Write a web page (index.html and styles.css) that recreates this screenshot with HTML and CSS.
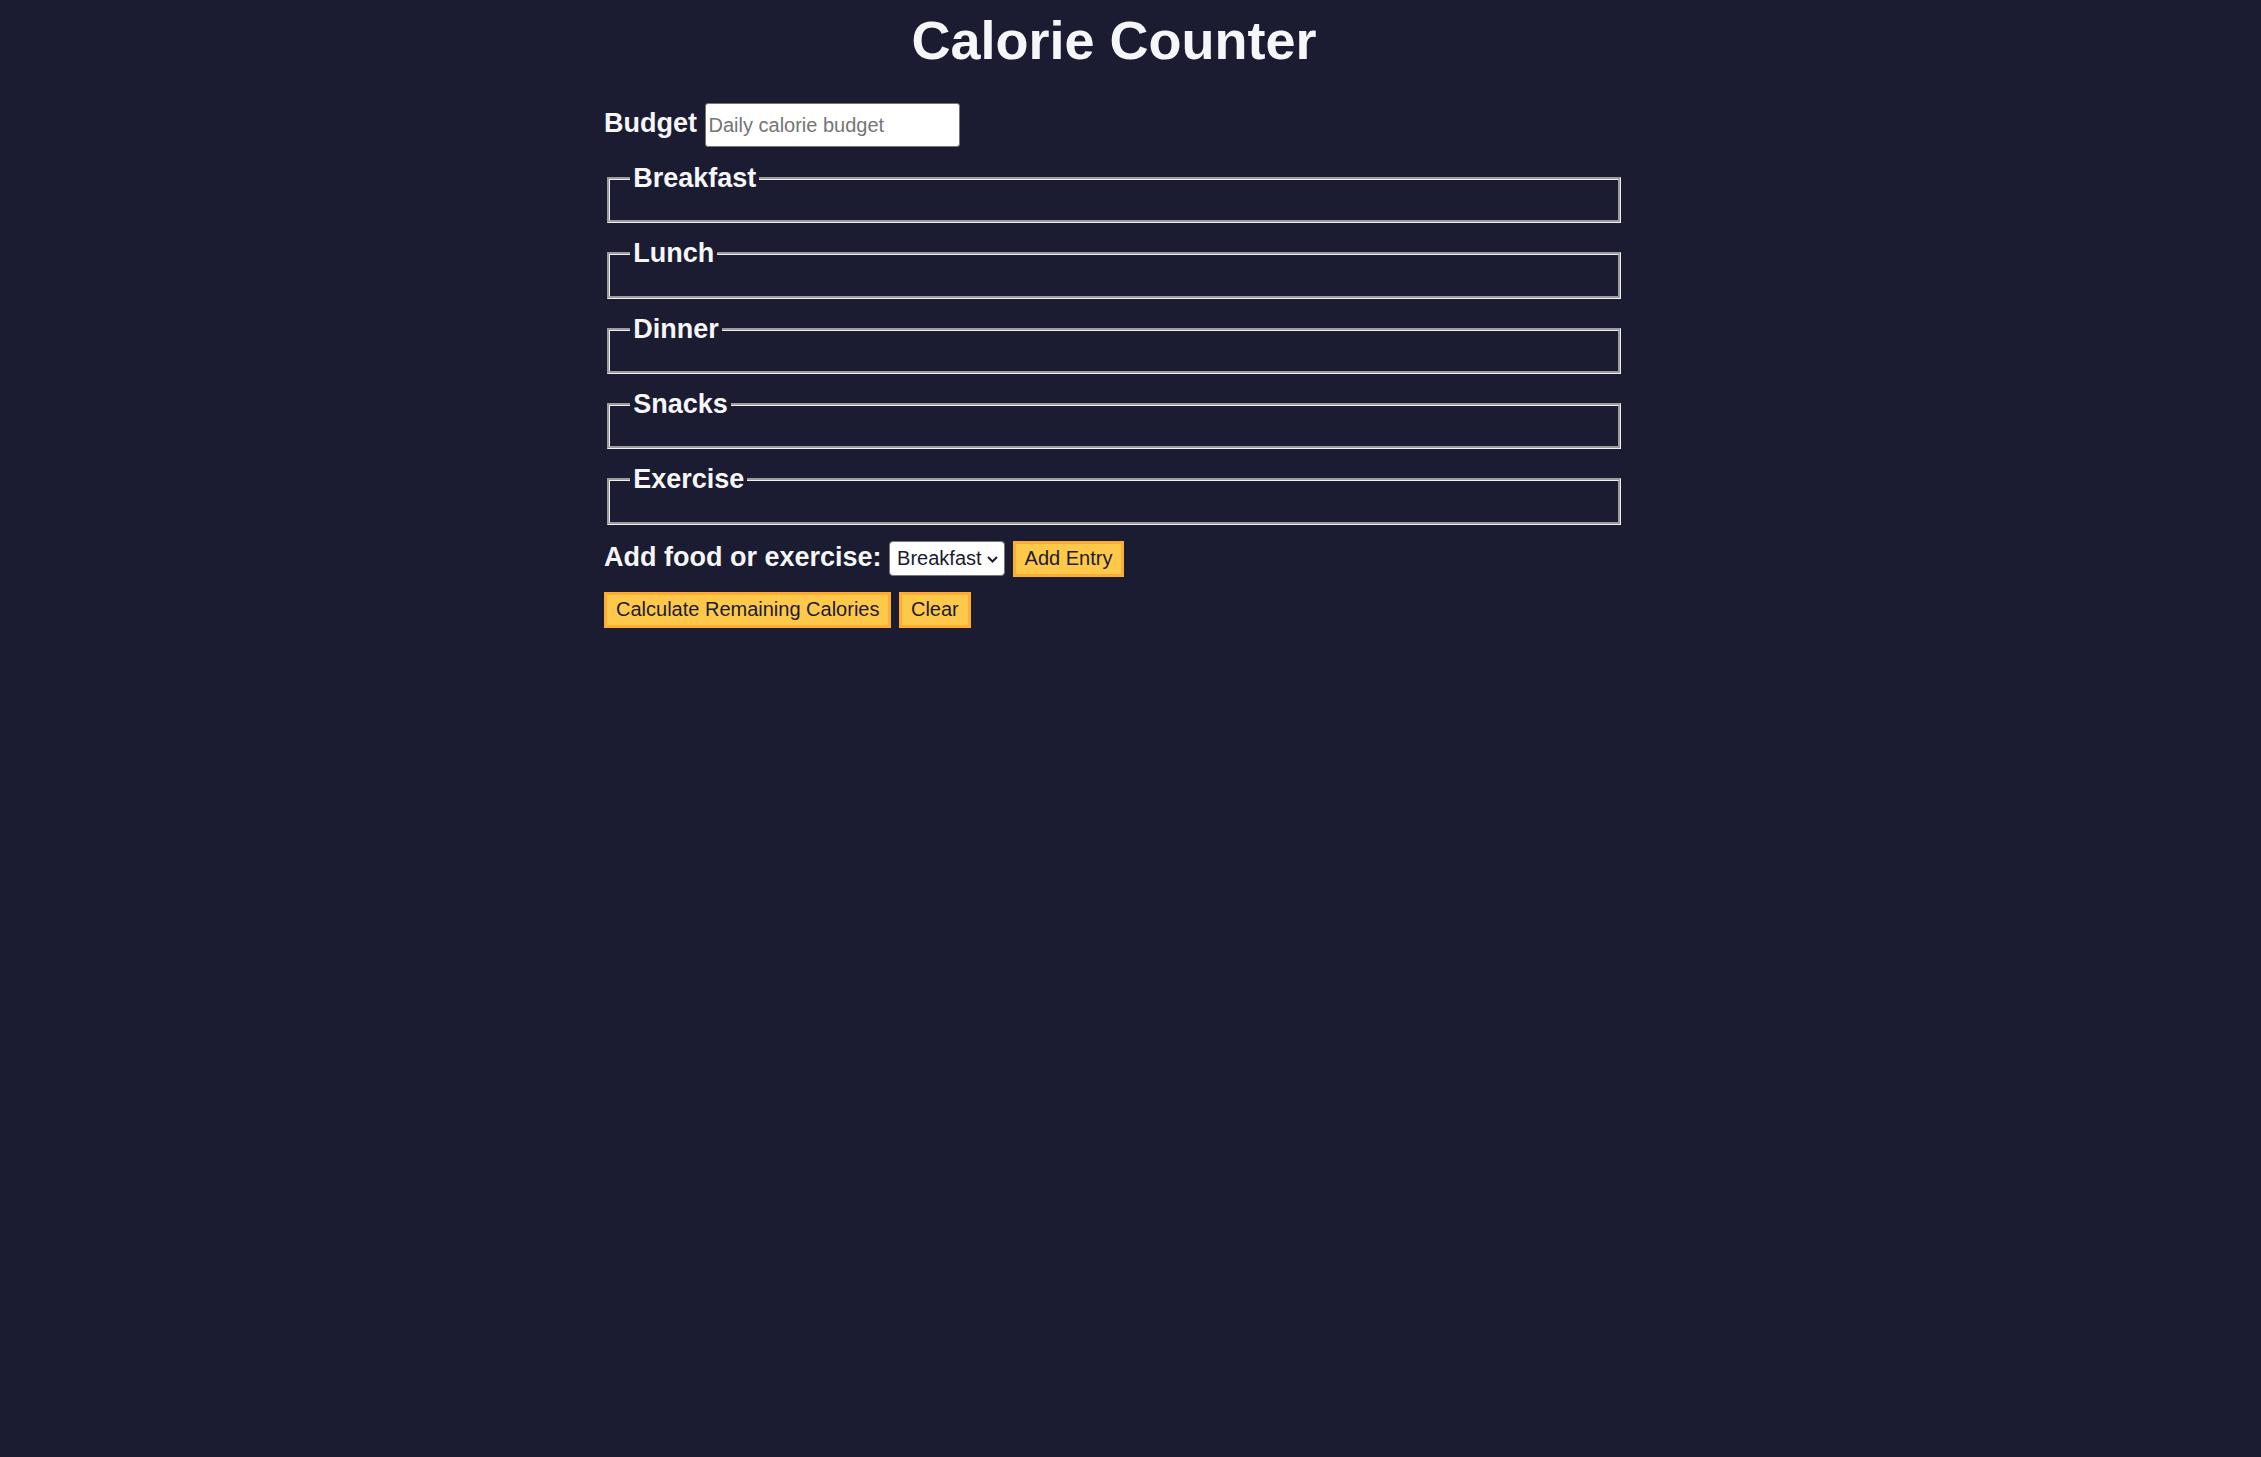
FILE: index.html
```html
<!DOCTYPE html>
<html lang="en">
<head>
<meta charset="utf-8">
<title>Calorie Counter</title>
<link rel="stylesheet" href="styles.css">
</head>
<body>
<h1 class="title">Calorie Counter</h1>
<div class="container">
  <form class="counter-form" id="calorie-counter">
    <div class="budget-row">
      <label class="field-label" for="budget">Budget</label>
      <input class="budget-input" type="number" min="0" id="budget" placeholder="Daily calorie budget">
    </div>
    <fieldset class="meal" id="breakfast"><legend class="meal-legend">Breakfast</legend><div class="input-container"></div></fieldset>
    <fieldset class="meal" id="lunch"><legend class="meal-legend">Lunch</legend><div class="input-container"></div></fieldset>
    <fieldset class="meal" id="dinner"><legend class="meal-legend">Dinner</legend><div class="input-container"></div></fieldset>
    <fieldset class="meal" id="snacks"><legend class="meal-legend">Snacks</legend><div class="input-container"></div></fieldset>
    <fieldset class="meal" id="exercise"><legend class="meal-legend">Exercise</legend><div class="input-container"></div></fieldset>
    <div class="controls">
      <label class="field-label" for="entry-dropdown">Add food or exercise:</label>
      <span class="select-wrap"><select class="entry-select" id="entry-dropdown" name="options">
          <option value="breakfast" selected>Breakfast</option>
          <option value="lunch">Lunch</option>
          <option value="dinner">Dinner</option>
          <option value="snacks">Snacks</option>
          <option value="exercise">Exercise</option>
        </select><svg class="chevron" width="11" height="7" viewBox="0 0 11 7" aria-hidden="true"><polyline points="1,1 5.5,5.5 10,1" fill="none" stroke="#1b1b32" stroke-width="2"/></svg></span>
      <button class="btn" type="button" id="add-entry">Add Entry</button>
    </div>
    <div class="actions">
      <button class="btn" type="submit">Calculate Remaining Calories</button>
      <button class="btn" type="button" id="clear">Clear</button>
    </div>
  </form>
</div>
</body>
</html>
```

FILE: styles.css
```css
* {
  box-sizing: border-box;
}

body {
  margin: 0;
  padding: 0 33px 0 0;
  background-color: #1b1b32;
  color: #f5f6f7;
  font-family: "Liberation Sans", Arial, sans-serif;
  font-size: 27px;
}

.title {
  margin: 9px 0 32px;
  font-size: 54px;
  line-height: 62px;
  font-weight: bold;
  text-align: center;
}

.container {
  width: 1020px;
  margin: 0 auto;
}

.field-label {
  font-weight: bold;
}

.budget-row {
  padding-bottom: 1px;
}

.budget-input {
  width: 255px;
  height: 44px;
  margin: 0 0 15px;
  padding: 0 3px;
  border: 1px solid #767676;
  border-radius: 3px;
  background: #fff;
  color: #1b1b32;
  font: 20px "Liberation Sans", Arial, sans-serif;
  vertical-align: baseline;
}

.budget-input::placeholder {
  color: #757575;
}

.meal {
  margin: 0 3px 15px;
  padding: 9.45px 20.25px 16.9px;
  border: 3px groove #f0f0f0;
  min-width: 0;
}

.meal-legend {
  padding: 0 3px;
  font-weight: bold;
  font-size: 27px;
}

.controls {
  padding-top: 1px;
}

.select-wrap {
  position: relative;
  display: inline-block;
}

.entry-select {
  appearance: none;
  -webkit-appearance: none;
  width: 116px;
  height: 35px;
  margin: 0 0 15px;
  padding: 0 0 0 7px;
  border: 1px solid #767676;
  border-radius: 4px;
  background: #fff;
  color: #1b1b32;
  font: 20px "Liberation Sans", Arial, sans-serif;
}

.chevron {
  position: absolute;
  right: 7px;
  top: 15px;
  pointer-events: none;
}

.btn {
  min-height: 36px;
  margin: 0 0 15px;
  padding: 0 9px;
  border: 3px solid #feac32;
  background-color: #fec94b;
  color: #1b1b32;
  font: 20px "Liberation Sans", Arial, sans-serif;
  cursor: pointer;
}
```
